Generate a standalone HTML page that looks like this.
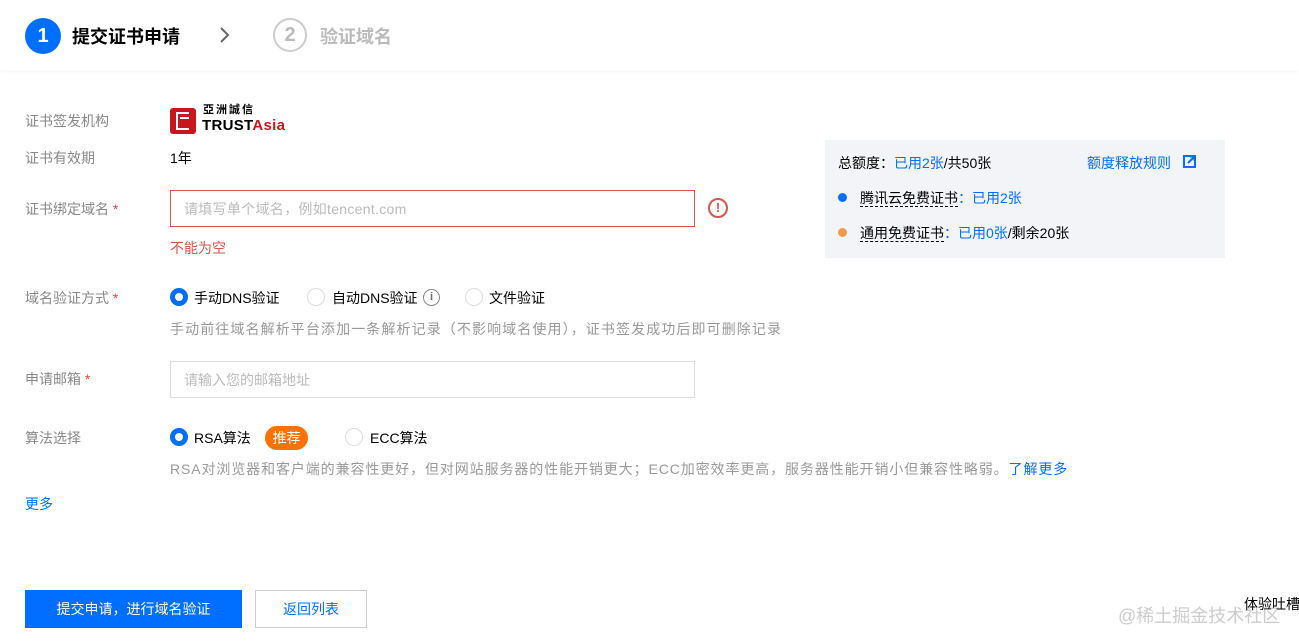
<!DOCTYPE html>
<html><head><meta charset="utf-8"><style>
*{margin:0;padding:0;box-sizing:border-box}
body{width:1299px;height:643px;background:#fff;font-family:"Liberation Sans","Noto Sans CJK SC",sans-serif;font-size:14px;color:#000;position:relative;overflow:hidden}
.a{position:absolute;white-space:nowrap}
.lbl{color:#888;font-size:14px}
.req{color:#e54545}
.hint{color:#999;font-size:14px}
.blue{color:#006eff}
.radio{position:absolute;width:18px;height:18px;border-radius:50%;border:1px solid #ddd;background:#fff}
.radio.on{border:5px solid #006eff}
</style></head><body>
<div class="a" style="left:0;top:0;width:1299px;height:70px;box-shadow:0 2px 4px rgba(0,0,0,.03)"></div>
<div class="a" style="left:25px;top:18px;width:36px;height:36px;border-radius:50%;background:#006eff;color:#fff;font-size:20px;font-weight:bold;text-align:center;line-height:36px">1</div>
<div class="a" style="left:72px;top:23px;font-size:18px;font-weight:bold;color:#000">提交证书申请</div>
<svg class="a" style="left:218px;top:26px" width="14" height="18"><path d="M3 2l7 7-7 7" fill="none" stroke="#666" stroke-width="2"/></svg>
<div class="a" style="left:273px;top:18px;width:34px;height:34px;border-radius:50%;border:2px solid #ccc;color:#bbb;font-size:20px;font-weight:bold;text-align:center;line-height:30px">2</div>
<div class="a" style="left:320px;top:23px;font-size:18px;font-weight:bold;color:#bbb">验证域名</div>

<div class="a lbl" style="left:25px;top:111px">证书签发机构</div>
<div class="a" style="left:170px;top:108px;width:26px;height:26px;background:#c8161e;border-radius:3px"></div>
<div class="a" style="left:176px;top:112px;width:13px;height:18px;border:2px solid #fff;border-right:none"></div>
<div class="a" style="left:180px;top:117px;width:9px;height:2px;background:#fff"></div>
<div class="a" style="left:203px;top:103px;font-size:11px;line-height:14px;font-weight:bold;letter-spacing:2px">亞洲誠信</div>
<div class="a" style="left:202px;top:118px;font-size:15px;line-height:16px;font-weight:bold;letter-spacing:0.3px">TRUST<span style="color:#c8161e">Asia</span></div>
<div class="a lbl" style="left:25px;top:148px">证书有效期</div>
<div class="a" style="left:170px;top:148px">1年</div>

<div class="a lbl" style="left:25px;top:199px">证书绑定域名 <span class="req">*</span></div>
<div class="a" style="left:170px;top:190px;width:525px;height:37px;border:1px solid #d9534f"></div>
<div class="a" style="left:184px;top:199px;color:#bbb;letter-spacing:0.3px">请填写单个域名，例如tencent.com</div>
<div class="a" style="left:708px;top:198px;width:20px;height:20px;border-radius:50%;border:2px solid #d9534f;color:#d9534f;text-align:center;font-weight:bold;font-size:13px;line-height:16px">!</div>
<div class="a" style="left:170px;top:238px;color:#d9534f">不能为空</div>

<div class="a lbl" style="left:25px;top:288px">域名验证方式 <span class="req">*</span></div>
<div class="radio on" style="left:170px;top:288px"></div>
<div class="a" style="left:194px;top:288px">手动DNS验证</div>
<div class="radio" style="left:307px;top:288px"></div>
<div class="a" style="left:332px;top:288px">自动DNS验证</div>
<div class="a" style="left:423px;top:289px;width:17px;height:17px;border-radius:50%;border:1.5px solid #888;color:#666;font-size:11px;text-align:center;line-height:14px;font-weight:bold">i</div>
<div class="radio" style="left:465px;top:288px"></div>
<div class="a" style="left:489px;top:288px">文件验证</div>
<div class="a hint" style="left:170px;top:319px;letter-spacing:1.1px">手动前往域名解析平台添加一条解析记录（不影响域名使用），证书签发成功后即可删除记录</div>

<div class="a lbl" style="left:25px;top:369px">申请邮箱 <span class="req">*</span></div>
<div class="a" style="left:170px;top:361px;width:525px;height:37px;border:1px solid #ddd"></div>
<div class="a" style="left:184px;top:370px;color:#bbb">请输入您的邮箱地址</div>

<div class="a lbl" style="left:25px;top:428px">算法选择</div>
<div class="radio on" style="left:170px;top:428px"></div>
<div class="a" style="left:194px;top:428px">RSA算法</div>
<div class="a" style="left:265px;top:426px;width:43px;height:24px;border-radius:12px;background:#ff7200;color:#fff;text-align:center;line-height:24px">推荐</div>
<div class="radio" style="left:345px;top:428px"></div>
<div class="a" style="left:370px;top:428px">ECC算法</div>
<div class="a hint" style="left:170px;top:459px;letter-spacing:0.9px">RSA对浏览器和客户端的兼容性更好，但对网站服务器的性能开销更大；ECC加密效率更高，服务器性能开销小但兼容性略弱。<span class="blue">了解更多</span></div>
<div class="a blue" style="left:25px;top:494px">更多</div>

<div class="a" style="left:825px;top:140px;width:400px;height:118px;background:#f3f4f7"></div>
<div class="a" style="left:838px;top:153px">总额度：<span class="blue">已用2张</span>/共50张</div>
<div class="a blue" style="left:1087px;top:153px">额度释放规则</div>
<svg class="a" style="left:1183px;top:155px" width="13" height="13"><rect x="1" y="1" width="11" height="11" fill="none" stroke="#006eff" stroke-width="2"/><path d="M5 8l6-6M7 1.5h4.5V6" stroke="#006eff" stroke-width="2" fill="none"/></svg>
<div class="a" style="left:838px;top:193px;width:9px;height:9px;border-radius:50%;background:#006eff"></div>
<div class="a" style="left:860px;top:188px"><span style="border-bottom:1px dashed #000">腾讯云免费证书</span><span class="blue">：已用2张</span></div>
<div class="a" style="left:838px;top:228px;width:9px;height:9px;border-radius:50%;background:#ef9a4a"></div>
<div class="a" style="left:860px;top:223px"><span style="border-bottom:1px dashed #000">通用免费证书</span><span class="blue">：已用0张</span>/剩余20张</div>

<div class="a" style="left:25px;top:590px;width:217px;height:38px;background:#006eff;color:#fff;text-align:center;line-height:38px">提交申请，进行域名验证</div>
<div class="a" style="left:255px;top:590px;width:112px;height:38px;border:1px solid #ccc;color:#006eff;text-align:center;line-height:36px">返回列表</div>
<div class="a" style="left:1118px;top:602px;font-size:18px;color:#ccc">@稀土掘金技术社区</div>
<div class="a" style="left:1244px;top:594px;font-size:14px">体验吐槽</div>
</body></html>
